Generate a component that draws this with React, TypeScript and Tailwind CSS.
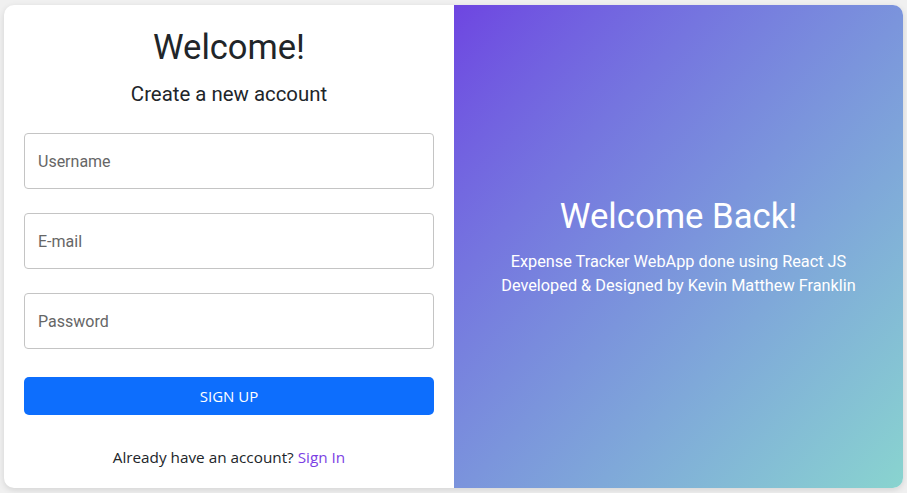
export default function App() {
  return (
    <div className="min-h-screen w-full bg-[#f0f0f0] px-[4px] pt-[5px] font-['Roboto',sans-serif]">
      <div className="flex h-[483px] w-[899px] overflow-hidden rounded-[10px] bg-white shadow-[0_2px_6px_rgba(0,0,0,0.12)]">
        {/* sign up form */}
        <div className="flex w-[450px] flex-col px-[20px]">
          <h1 className="mt-[22px] text-center text-[34.5px] leading-[40px] text-[#212529]">Welcome!</h1>
          <p className="mt-[15px] text-center text-[20.4px] leading-[24px] text-[#212529]">Create a new account</p>
          <form className="mt-[27px] flex flex-col gap-[24px]">
            <input
              placeholder="Username"
              className="h-[56px] w-full rounded-[4px] border border-[#c4c4c4] px-[13px] text-[16px] text-[#212529] outline-none placeholder:text-[#666]"
            />
            <input
              placeholder="E-mail"
              className="h-[56px] w-full rounded-[4px] border border-[#c4c4c4] px-[13px] text-[16px] text-[#212529] outline-none placeholder:text-[#666]"
            />
            <input
              type="password"
              placeholder="Password"
              className="h-[56px] w-full rounded-[4px] border border-[#c4c4c4] px-[13px] text-[16px] text-[#212529] outline-none placeholder:text-[#666]"
            />
          </form>
          <button className="mt-[28px] h-[38px] w-full rounded-[5px] bg-[#0d6efd] font-['Open_Sans',sans-serif] text-[15px] text-white">
            SIGN UP
          </button>
          <p className="mt-[31px] text-center font-['Open_Sans',sans-serif] text-[15.3px] text-[#212529]">
            Already have an account? <a className="text-[#7b3fe4]">Sign In</a>
          </p>
        </div>
        {/* welcome panel */}
        <div className="flex flex-1 flex-col items-center justify-center bg-gradient-to-br from-[#6e45e1] to-[#89d4cf] text-white">
          <h2 className="text-[34.7px] leading-[40px]">Welcome Back!</h2>
          <p className="mt-[14px] text-center text-[16.3px] leading-[24px]">
            Expense Tracker WebApp done using React JS
            <br />
            Developed &amp; Designed by Kevin Matthew Franklin
          </p>
        </div>
      </div>
    </div>
  );
}
